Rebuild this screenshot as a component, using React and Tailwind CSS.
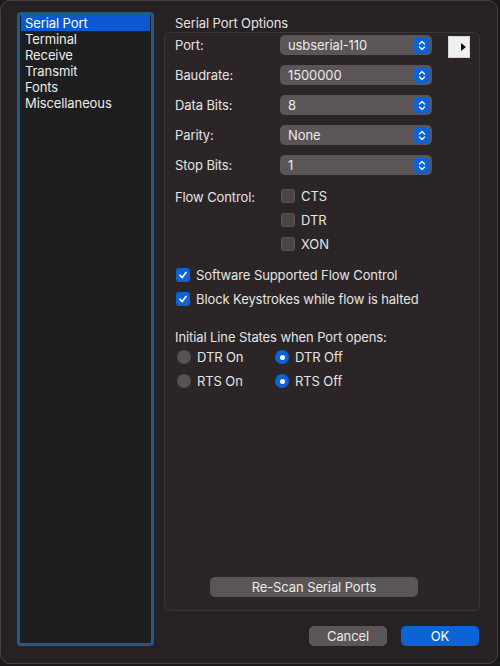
const items = ['Serial Port', 'Terminal', 'Receive', 'Transmit', 'Fonts', 'Miscellaneous']

function Stepper() {
  return (
    <div className="w-4 h-4 rounded-[4px] bg-[#0b63d6] flex items-center justify-center">
      <svg width="8" height="11" viewBox="0 0 8 11" fill="none" stroke="#fff" strokeWidth="1.3" strokeLinecap="round" strokeLinejoin="round">
        <path d="M1.5 4 L4 1.5 L6.5 4" />
        <path d="M1.5 7 L4 9.5 L6.5 7" />
      </svg>
    </div>
  )
}

function Popup({ value }) {
  return (
    <div className="w-[152px] h-5 rounded-[5px] bg-[#5b5557] flex items-center justify-between pl-[8px] pr-[2px] text-[#ebebeb]">
      <span>{value}</span>
      <Stepper />
    </div>
  )
}

function Check({ on }) {
  return on ? (
    <div className="w-[14px] h-[14px] rounded-[3px] bg-[#0b63d6] flex items-center justify-center">
      <svg width="10" height="10" viewBox="0 0 10 10" fill="none" stroke="#fff" strokeWidth="1.8" strokeLinecap="round" strokeLinejoin="round">
        <path d="M2 5.3 L4.2 7.5 L8 2.5" />
      </svg>
    </div>
  ) : (
    <div className="w-[14px] h-[14px] rounded-[3px] bg-[#4d4749] border border-[#5c5658]" />
  )
}

function Radio({ on }) {
  return on ? (
    <div className="w-[14px] h-[14px] rounded-full bg-[#0b63d6] flex items-center justify-center">
      <div className="w-[5px] h-[5px] rounded-full bg-white" />
    </div>
  ) : (
    <div className="w-[14px] h-[14px] rounded-full bg-[#575153]" />
  )
}

const popups = [
  ['Port:', 'usbserial-110'],
  ['Baudrate:', '1500000'],
  ['Data Bits:', '8'],
  ['Parity:', 'None'],
  ['Stop Bits:', '1'],
]

export default function App() {
  return (
    <div className="w-[500px] h-[666px] bg-[#1b1819] text-[13px] leading-4 tracking-[-0.1px] text-[#e4e4e4]" style={{ fontFamily: 'Inter, "Noto Sans", sans-serif' }}>
      <div className="w-[498px] h-[664px] rounded-[10px] border border-[#47403f] bg-[#282123] flex pl-4 pt-[11px] pr-[17px]">
        {/* source list */}
        <div className="w-[137px] h-[634px] rounded-[4px] border-[3px] border-[#1c5d8c] bg-[#1e1e1e] px-[1px] pt-0">
          {items.map((it, i) => (
            <div key={it} className={`h-4 pl-[4px] ${i === 0 ? 'bg-[#0b59d0] text-white' : 'text-[#ececec]'}`}>{it}</div>
          ))}
        </div>

        <div className="ml-[10px] flex-1 flex flex-col">
          <div className="h-[20px] pl-[11px] pt-[3px]">Serial Port Options</div>

          <div className="h-[579px] rounded-[6px] border border-[#3c3537] bg-[#2c2527] flex flex-col pl-[10px] pt-[2px] pb-[13px]">
            <div className="flex flex-col gap-[10px]">
              {popups.map(([label, value], i) => (
                <div key={label} className="flex items-center h-5">
                  <div className="w-[105px]">{label}</div>
                  <Popup value={value} />
                  {i === 0 && (
                    <div className="ml-4 mt-[3px] w-[22px] h-[22px] bg-[#f0f0f0] border border-[#d4d4d4] flex items-center justify-end pr-[3px]">
                      <svg width="5" height="8" viewBox="0 0 5 8"><path d="M0 0 L5 4 L0 8 Z" fill="#111" /></svg>
                    </div>
                  )}
                </div>
              ))}
            </div>

            <div className="flex mt-[9px]">
              <div className="w-[105px] h-6 flex items-center pt-[1px]">Flow Control:</div>
              <div className="flex flex-col">
                {['CTS', 'DTR', 'XON'].map((c) => (
                  <div key={c} className="h-6 flex items-center gap-[6px] pl-[1px]">
                    <Check />
                    <span>{c}</span>
                  </div>
                ))}
              </div>
            </div>

            <div className="flex flex-col mt-[7px]">
              {['Software Supported Flow Control', 'Block Keystrokes while flow is halted'].map((t) => (
                <div key={t} className="h-6 flex items-center gap-[6px] pl-[1px]">
                  <Check on />
                  <span>{t}</span>
                </div>
              ))}
            </div>

            <div className="mt-[18px]">Initial Line States when Port opens:</div>
            <div className="grid grid-cols-[98px_auto]">
              {[['DTR On', false], ['DTR Off', true], ['RTS On', false], ['RTS Off', true]].map(([t, on]) => (
                <div key={t} className="h-6 flex items-center gap-[6px] pl-[2px]">
                  <Radio on={on} />
                  <span>{t}</span>
                </div>
              ))}
            </div>

            <div className="mt-auto ml-[35px] w-[208px] h-5 rounded-[5px] bg-[#5b5557] flex items-center justify-center text-[#ebebeb]">
              Re-Scan Serial Ports
            </div>
          </div>

          <div className="flex justify-end gap-[14px] mt-[15px] pr-[1px]">
            <div className="w-[78px] h-5 rounded-[5px] bg-[#5b5557] flex items-center justify-center text-[#ebebeb]">Cancel</div>
            <div className="w-[78px] h-5 rounded-[5px] bg-[#0b63d6] flex items-center justify-center text-white">OK</div>
          </div>
        </div>
      </div>
    </div>
  )
}
